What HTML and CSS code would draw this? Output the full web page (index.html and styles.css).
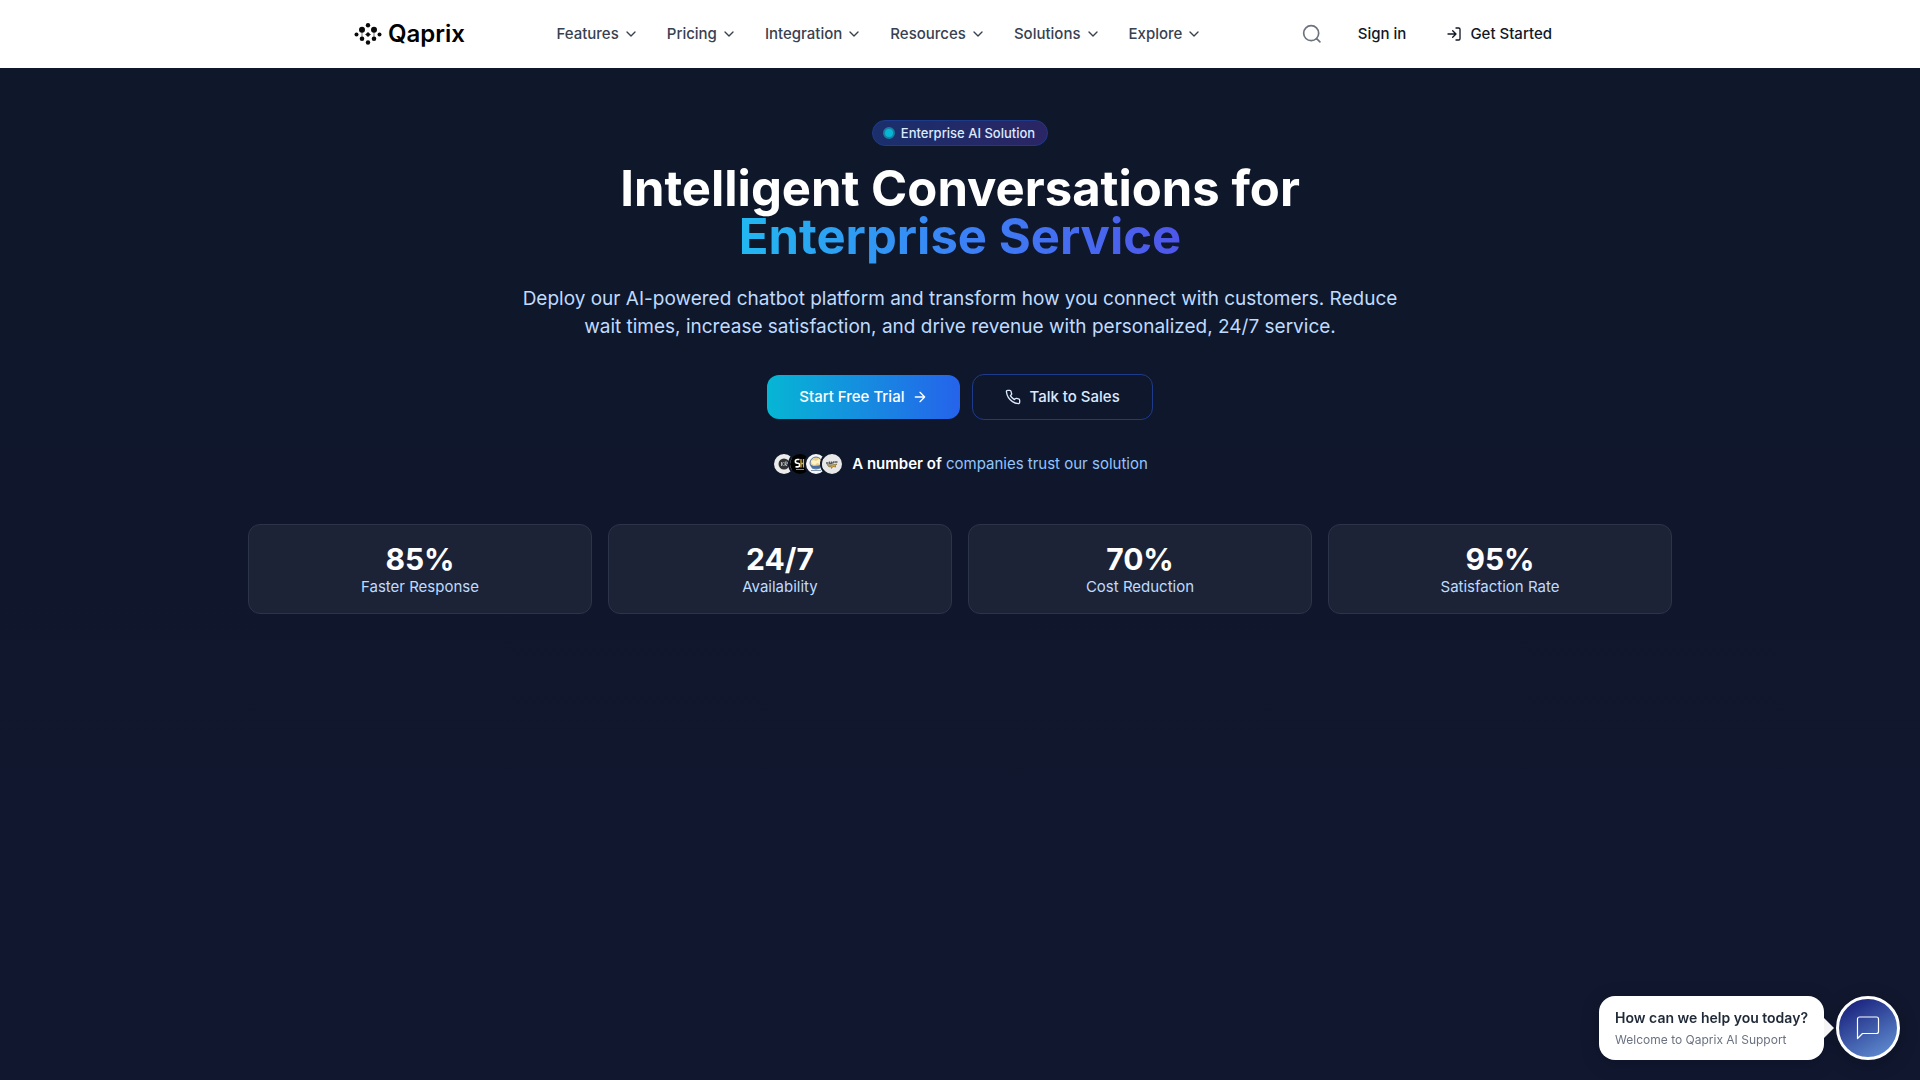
FILE: index.html
```html
<!DOCTYPE html>
<html lang="en">
<head>
  <meta charset="UTF-8">
  <title>Qaprix – Enterprise AI Solution</title>
  <meta name="viewport" content="width=device-width, initial-scale=1.0">
  <link rel="stylesheet" href="styles.css">
</head>
<body>

<!-- Shared icons -->
<svg class="sprite" aria-hidden="true">
  <symbol id="chevron" viewBox="0 0 24 24"><path d="m6 9 6 6 6-6"/></symbol>
</svg>

<header class="site-header">
  <div class="header-inner">
    <a class="logo" href="#">
      <svg width="28" height="24" viewBox="0 0 28 24" fill="#0a0a0a" stroke="#0a0a0a" stroke-width="1" aria-hidden="true">
        <path d="M8 7v10M20 7v10M11 12.500h6M14 10v5" stroke="#777"/>
        <g stroke="none">
          <circle cx="14" cy="3.300" r="2.200"/>
          <circle cx="8" cy="7.800" r="3"/>
          <circle cx="20" cy="7.800" r="3"/>
          <circle cx="2.500" cy="12.500" r="2"/>
          <circle cx="14" cy="12.500" r="1.900"/>
          <circle cx="25.500" cy="12.500" r="2"/>
          <circle cx="8" cy="16.800" r="2.300"/>
          <circle cx="20" cy="16.800" r="2.300"/>
          <circle cx="14" cy="20.500" r="2.200"/>
        </g>
      </svg>
      <span>Qaprix</span>
    </a>

    <nav class="main-nav">
      <button class="nav-item">Features <svg class="icon"><use href="#chevron"/></svg></button>
      <button class="nav-item">Pricing <svg class="icon"><use href="#chevron"/></svg></button>
      <button class="nav-item">Integration <svg class="icon"><use href="#chevron"/></svg></button>
      <button class="nav-item">Resources <svg class="icon"><use href="#chevron"/></svg></button>
      <button class="nav-item">Solutions <svg class="icon"><use href="#chevron"/></svg></button>
      <button class="nav-item">Explore <svg class="icon"><use href="#chevron"/></svg></button>
    </nav>

    <div class="header-actions">
      <button class="search-btn" aria-label="Search">
        <svg class="icon icon-lg" viewBox="0 0 24 24"><circle cx="11" cy="11" r="9"/><path d="m21.500 21.500-4-4"/></svg>
      </button>
      <a class="header-link" href="#">Sign in</a>
      <a class="header-link" href="#">
        <svg class="icon" viewBox="0 0 24 24"><path d="M15 3h4a2 2 0 0 1 2 2v14a2 2 0 0 1-2 2h-4M10 17l5-5-5-5M15 12H3"/></svg>
        Get Started
      </a>
    </div>
  </div>
</header>

<main class="hero">
  <div class="badge"><span class="badge-dot"></span>Enterprise AI Solution</div>

  <h1>Intelligent Conversations for <span class="gradient-text">Enterprise Service</span></h1>

  <p class="lead">Deploy our AI-powered chatbot platform and transform how you connect with customers. Reduce wait times, increase satisfaction, and drive revenue with personalized, 24/7 service.</p>

  <div class="cta">
    <a class="btn btn-primary" href="#">
      Start Free Trial
      <svg class="icon" viewBox="0 0 24 24"><path d="M5 12h14M12 5l7 7-7 7"/></svg>
    </a>
    <a class="btn btn-outline" href="#">
      <svg class="icon" viewBox="0 0 24 24"><path d="M22 16.920v3a2 2 0 0 1-2.180 2 19.790 19.790 0 0 1-8.630-3.070 19.500 19.500 0 0 1-6-6 19.790 19.790 0 0 1-3.070-8.670A2 2 0 0 1 4.110 2h3a2 2 0 0 1 2 1.720 12.840 12.840 0 0 0 .7 2.810 2 2 0 0 1-.45 2.110L8.090 9.910a16 16 0 0 0 6 6l1.270-1.270a2 2 0 0 1 2.110-.45 12.840 12.840 0 0 0 2.810.7A2 2 0 0 1 22 16.920z"/></svg>
      Talk to Sales
    </a>
  </div>

  <div class="trust">
    <div class="avatars">
      <svg class="avatar" viewBox="0 0 20 20" aria-hidden="true">
        <rect width="20" height="20" fill="#ececec"/>
        <circle cx="10" cy="10" r="5.500" fill="#303236"/>
        <path d="M7.500 8v4M9.700 8l-2 2 2 2M11 12V8h1.500a1 1 0 0 1 0 2H11l2 2" fill="none" stroke="#ccc" stroke-width=".8"/>
      </svg>
      <svg class="avatar" viewBox="0 0 20 20" aria-hidden="true">
        <rect width="20" height="20" fill="#000"/>
        <path d="M9.500 5.500H7.200a1.700 1.700 0 0 0 0 3.700h.6a1.700 1.700 0 0 1 0 3.700H5.500" fill="none" stroke="#fff" stroke-width="1.600"/>
        <path d="M11 5v8.500M11 9.500h2.500M13.500 5v8.500" fill="none" stroke="#d9b33c" stroke-width="1.300"/>
        <path d="M6 15.500h8" stroke="#a98a2e"/>
      </svg>
      <svg class="avatar" viewBox="0 0 20 20" aria-hidden="true">
        <rect width="20" height="20" fill="#f6f7f8"/>
        <circle cx="10" cy="9" r="6" fill="#e9cf8c" stroke="#56779f"/>
        <path d="M5 7l3-1 2 1 3-2 2 2-1 3-3-1-2 2-3-1z" fill="#fff1c4"/>
        <path d="M4.500 10.500l3 1.500 5-.5 3-1-1.500 4H6z" fill="#456fa5"/>
        <path d="M5 16.500h10" stroke="#8796aa"/>
      </svg>
      <svg class="avatar" viewBox="0 0 20 20" aria-hidden="true">
        <rect width="20" height="20" fill="#e8e8e8"/>
        <path d="M4 9h2.500M7.500 7.500v2h2v-2M10.500 9.500l1.500-2M12.500 8h3" fill="none" stroke="#55585c" stroke-width="1.300"/>
        <path d="M5 10.500l4 .5 6-1-2 2 1 1-3-.5-1.500 2-.5-2-2 .5z" fill="#d8a72a" stroke="#5b5130" stroke-width=".5"/>
      </svg>
    </div>
    <p><strong>A number of</strong> companies trust our solution</p>
  </div>

  <section class="stats">
    <div class="stat">
      <div class="stat-value">85%</div>
      <div class="stat-label">Faster Response</div>
    </div>
    <div class="stat">
      <div class="stat-value">24/7</div>
      <div class="stat-label">Availability</div>
    </div>
    <div class="stat">
      <div class="stat-value">70%</div>
      <div class="stat-label">Cost Reduction</div>
    </div>
    <div class="stat">
      <div class="stat-value">95%</div>
      <div class="stat-label">Satisfaction Rate</div>
    </div>
  </section>
</main>

<!-- Chat widget -->
<div class="chat">
  <div class="chat-bubble">
    <div class="chat-title">How can we help you today?</div>
    <div class="chat-text">Welcome to Qaprix AI Support</div>
  </div>
  <button class="chat-btn" aria-label="Open chat">
    <svg width="28" height="28" viewBox="0 0 28 28" fill="none" stroke="#fff" stroke-width="1.200" stroke-linejoin="round" aria-hidden="true">
      <path d="M3.500 24.500V5a2 2 0 0 1 2-2h17a2 2 0 0 1 2 2v12.500a2 2 0 0 1-2 2h-14z"/>
    </svg>
  </button>
</div>

</body>
</html>
```
FILE: styles.css
```css
/* Base */
* {
  box-sizing: border-box;
}
body {
  margin: 0;
  min-height: 100vh;
  background: linear-gradient(180deg, #0f172a 0%, #10172d 50%, #10172f 100%);
  font-family: Inter, "Liberation Sans", sans-serif;
  font-size: 15px;
  line-height: 20px;
  color: #fff;
}
a {
  color: inherit;
  text-decoration: none;
}
button {
  font: inherit;
  color: inherit;
  background: none;
  border: none;
  padding: 0;
  cursor: pointer;
}
.sprite {
  display: none;
}
.icon {
  width: 16px;
  height: 16px;
  flex: none;
  fill: none;
  stroke: currentColor;
  stroke-width: 2;
  stroke-linecap: round;
  stroke-linejoin: round;
}
.icon-lg {
  width: 20px;
  height: 20px;
}

/* Header */
.site-header {
  background: #fff;
  color: #111827;
  font-weight: 500;
}
.header-inner {
  display: flex;
  align-items: center;
  justify-content: space-between;
  max-width: 1280px;
  height: 68px;
  margin: 0 auto;
  padding: 0 32px;
}
.logo {
  display: flex;
  align-items: center;
  gap: 6px;
  padding-left: 2px;
  color: #000;
  font-size: 24px;
  font-weight: 600;
  line-height: 28px;
}
.main-nav {
  display: flex;
  gap: 4px;
}
.nav-item {
  display: flex;
  align-items: center;
  gap: 4px;
  padding: 8px 12px;
  color: #374151;
}
.header-actions {
  display: flex;
  align-items: center;
  gap: 8px;
}
.search-btn {
  display: flex;
  padding: 8px;
  margin-right: 4px;
  color: #6b7280;
}
.header-link {
  display: flex;
  align-items: center;
  gap: 8px;
  padding: 8px 16px;
}

/* Hero */
.hero {
  display: flex;
  flex-direction: column;
  align-items: center;
  max-width: 1456px;
  margin: 0 auto;
  padding: 52px 16px;
  text-align: center;
}
.badge {
  display: flex;
  align-items: center;
  gap: 6px;
  padding: 4px 12px 4px 10px;
  border: 1px solid #1e3a8a;
  border-radius: 13px;
  background: linear-gradient(90deg, #1a2f6c, #2b2564);
  color: #dbeafe;
  font-size: 13px;
  font-weight: 500;
  line-height: 16px;
}
.badge-dot {
  width: 12px;
  height: 12px;
  border: 2px solid #177f9f;
  border-radius: 50%;
  background: #06b6d4;
}
h1 {
  max-width: 896px;
  margin: 19px 0 20px;
  font-size: 49px;
  font-weight: 700;
  line-height: 48px;
}
.gradient-text {
  display: block;
  width: fit-content;
  margin: 0 auto;
  padding-bottom: 4px;
  background: linear-gradient(90deg, #22b8f0, #3b82f6 50%, #4f56ea);
  -webkit-background-clip: text;
  background-clip: text;
  color: transparent;
}
.lead {
  max-width: 896px;
  margin: 0 0 33px;
  color: #bfdbfe;
  font-size: 19px;
  line-height: 28px;
}
.cta {
  display: flex;
  align-items: center;
  gap: 12px;
  margin-bottom: 32px;
}
.btn {
  display: flex;
  align-items: center;
  gap: 8px;
  padding: 12px 32px;
  border-radius: 12px;
  font-weight: 500;
}
.btn-primary {
  background: linear-gradient(90deg, #06b6d4, #2563eb);
}
.btn-outline {
  border: 1px solid #1e3a8a;
  color: #dbeafe;
}

/* Trust row */
.trust {
  display: flex;
  align-items: center;
  gap: 8px;
  margin-bottom: 48px;
  color: #93c5fd;
}
.trust p {
  margin: 0;
}
.trust strong {
  color: #fff;
  font-weight: 600;
}
.avatars {
  display: flex;
}
.avatar {
  width: 24px;
  height: 24px;
  border: 2px solid #0f172a;
  border-radius: 50%;
}
.avatar + .avatar {
  margin-left: -8px;
}

/* Stats */
.stats {
  display: grid;
  grid-template-columns: repeat(4, 1fr);
  gap: 16px;
  width: 100%;
}
.stat {
  padding: 16px;
  border: 1px solid #2c3449;
  border-radius: 12px;
  background: #1d2337;
}
.stat-value {
  font-size: 30px;
  font-weight: 700;
  line-height: 36px;
}
.stat-label {
  color: #bfdbfe;
}

/* Chat widget */
.chat {
  position: fixed;
  right: 20px;
  bottom: 20px;
  display: flex;
  align-items: center;
  gap: 12px;
}
.chat-bubble {
  position: relative;
  padding: 12px 16px;
  border-radius: 16px;
  background: #fff;
  box-shadow: 0 4px 20px rgba(0, 0, 0, 0.15);
}
.chat-bubble::after {
  content: "";
  position: absolute;
  top: 50%;
  left: 100%;
  margin-top: -10px;
  border: 10px solid transparent;
  border-left-color: #f5f5f5;
  border-right: none;
}
.chat-title {
  color: #1f2937;
  font-size: 14px;
  font-weight: 600;
}
.chat-text {
  margin-top: 4px;
  color: #6b7280;
  font-size: 12px;
  line-height: 16px;
}
.chat-btn {
  display: flex;
  align-items: center;
  justify-content: center;
  width: 64px;
  height: 64px;
  border: 3px solid #fff;
  border-radius: 50%;
  background: linear-gradient(150deg, #1a237e 10%, #6290d3 95%);
  box-shadow: 0 4px 20px rgba(0, 0, 0, 0.2);
}
```
